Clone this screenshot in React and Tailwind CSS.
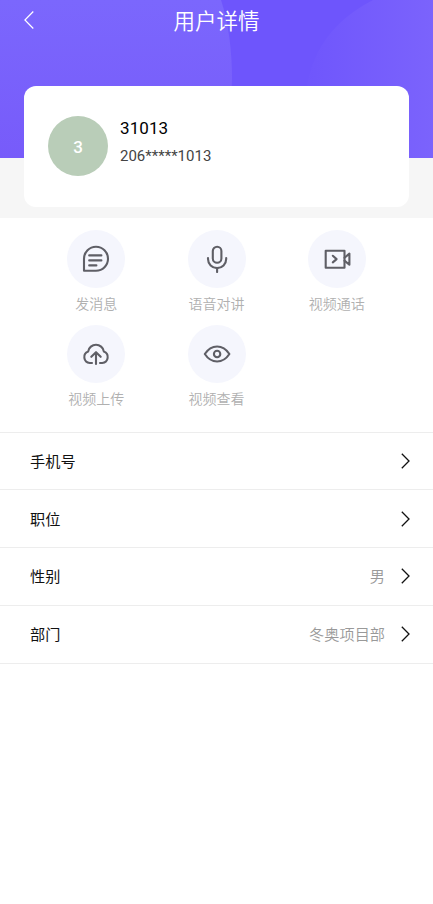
import React from 'react';

const actions = [
    {
        label: "发消息",
        icon: <>
            <path d="M2 25.7V13.7A12 12 0 1 1 14 25.7Z"/>
            <path d="M7.2 10.4H19.4M7.2 15.4H19.4M7.2 20.4H14.4"/>
        </>,
    },
    {
        label: "语音对讲",
        icon: <>
            <rect x="9.8" y="1.8" width="8.6" height="16" rx="4.3"/>
            <path d="M5 13v1a9.1 9.1 0 0 0 18.2 0v-1M14.1 23v4"/>
        </>,
    },
    {
        label: "视频通话",
        icon: <>
            <rect x="2.7" y="5.7" width="18.8" height="17"/>
            <path d="M9.8 10.8L13.6 14.1L9.8 17.4"/>
            <path d="M21.5 12.8L26.4 8.6V19.8L21.5 15.6"/>
        </>,
    },
    {
        label: "视频上传",
        icon: <>
            <path d="M10 23H7.8A6 6 0 0 1 6.2 11.4A7.9 7.9 0 0 1 21.8 11.4A6 6 0 0 1 20.2 23H18"/>
            <path d="M14 24V12.6M9.3 16.8L14 12.2L18.7 16.8"/>
        </>,
    },
    {
        label: "视频查看",
        icon: <>
            <path d="M1.8 14C8.4 4 19.8 4 26.4 14C19.8 24 8.4 24 1.8 14Z"/>
            <circle cx="14.1" cy="14" r="3.2"/>
        </>,
    },
];

const rows = [
    {label: "手机号", value: ""},
    {label: "职位", value: ""},
    {label: "性别", value: "男"},
    {label: "部门", value: "冬奥项目部"},
];

const HeaderBackground = () => (
    <svg className="absolute inset-x-0 top-0 w-full h-[158px]" viewBox="0 0 433 158" preserveAspectRatio="none">
        <defs>
            <linearGradient id="left" x1="0" y1="0" x2="0" y2="1">
                <stop offset="0" stopColor="#7b67fd"/>
                <stop offset="1" stopColor="#775bfa"/>
            </linearGradient>
            <linearGradient id="right" x1="0" y1="0" x2="1" y2="0">
                <stop offset="0" stopColor="#6f56fc"/>
                <stop offset="1" stopColor="#7b63fc"/>
            </linearGradient>
        </defs>
        <rect width="433" height="158" fill="#6e55fc"/>
        <path d="M0 0H221Q232 34 232 80Q232 120 218 158H0Z" fill="url(#left)"/>
        <path d="M433 0H373Q305 35 305 110V158H433Z" fill="url(#right)"/>
    </svg>
);

const App = () => {
    return (
        <div className="min-h-[904px] bg-white font-[Roboto,'Noto_Sans_CJK_SC',sans-serif]">
            <div className="relative h-[218px] bg-[#f6f6f6]">
                <HeaderBackground/>
                <div className="relative h-[86px] px-6">
                    <div className="grid grid-cols-[1fr_auto_1fr] items-start">
                        <svg className="mt-[11px] w-[10px] h-[18px]" viewBox="0 0 10 18" fill="none" stroke="#fff" strokeWidth="1.2">
                            <path d="M9.3 0.5L0.9 9L9.3 17.5"/>
                        </svg>
                        <h1 className="text-[21.5px] leading-[43px] font-[350] text-white">用户详情</h1>
                    </div>
                </div>
                <div className="relative mx-6 h-[120.5px] px-6 bg-white rounded-[12px] flex items-center">
                    <div className="mb-px size-[60px] rounded-full bg-[#b9cdb8] text-white text-[17px] font-medium flex items-center justify-center">
                        <span className="pt-[3px]">3</span>
                    </div>
                    <div className="ml-3 mb-[9px]">
                        <p className="text-[17px] leading-7 text-black tracking-[0.1px]">31013</p>
                        <p className="text-[15px] leading-7 text-[#444]">206*****1013</p>
                    </div>
                </div>
            </div>

            <div className="grid grid-cols-[repeat(3,120.3px)] auto-rows-[94.5px] pl-[36.1px] pt-3 h-[213.5px]">
                {actions.map((x) =>
                    <div key={x.label} className="flex flex-col items-center">
                        <div className="size-[58px] rounded-full bg-[#f5f6fd] flex items-center justify-center">
                            <svg className="size-7" viewBox="0 0 28 28" fill="none" stroke="#5f5f66" strokeWidth="2.1"
                                 strokeLinecap="round" strokeLinejoin="round">
                                {x.icon}
                            </svg>
                        </div>
                        <span className="mt-[6px] text-sm leading-5 font-[350] text-[#b0b0b0]">{x.label}</span>
                    </div>
                )}
            </div>

            <div className="border-t border-[#ededed]">
                {rows.map((x) =>
                    <div key={x.label}
                         className="h-[57.75px] pl-[30px] pr-[23px] flex items-center border-b border-[#ededed] text-[15.2px]">
                        <span className="flex-1 pt-[3px] text-[#111]">{x.label}</span>
                        <span className="pt-[3px] font-[350] text-[#999]">{x.value}</span>
                        <svg className="ml-4 w-[9px] h-4" viewBox="0 0 9 16" fill="none" stroke="#111" strokeWidth="1.3">
                            <path d="M0.8 0.8L8 8L0.8 15.2"/>
                        </svg>
                    </div>
                )}
            </div>
        </div>
    );
};

export default App;
